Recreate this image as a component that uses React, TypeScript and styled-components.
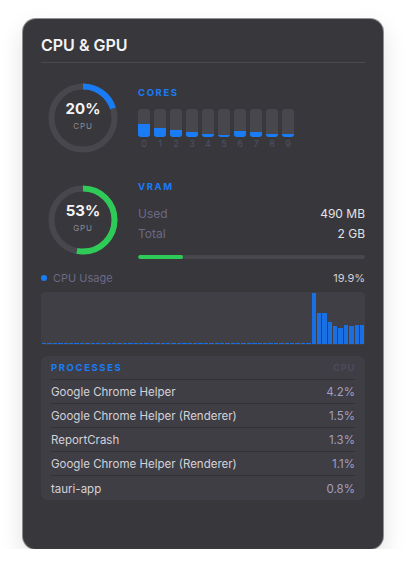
import React from "react";
import styled, { createGlobalStyle } from "styled-components";

const GlobalStyle = createGlobalStyle`
  html, body { margin: 0; padding: 0; background: #ffffff; }
  body { font-family: Inter, "Noto Sans", "Liberation Sans", sans-serif; -webkit-font-smoothing: antialiased; }
  * { box-sizing: border-box; }
`;

const BLUE = "#1a7cf4";
const BAR_BLUE = "#1a6fe2";
const GREEN = "#2fcb58";
const TRACK = "#48474d";

const Page = styled.div`
  padding: 19px 0 0 23px;
`;

const Card = styled.div`
  width: 360px;
  height: 530px;
  background: #38373c;
  border-radius: 13px;
  padding: 16px 18px 0 18px;
  box-shadow: 0 0 0 1px rgba(60, 60, 64, 0.55), 0 10px 24px rgba(0, 0, 0, 0.13);
  display: flex;
  flex-direction: column;
`;

const Title = styled.h1`
  margin: 0;
  font-size: 16px;
  line-height: 20px;
  font-weight: 600;
  color: #f3f3f6;
  padding-bottom: 7px;
  border-bottom: 1px solid #4a494f;
`;

const GaugeRow = styled.div<{ $top: number }>`
  display: grid;
  grid-template-columns: 84px 1fr;
  column-gap: 13px;
  align-items: center;
  margin-top: ${(p) => p.$top}px;
`;

const RingWrap = styled.div`
  position: relative;
  width: 70px;
  height: 70px;
  justify-self: center;
`;

const RingCenter = styled.div`
  position: absolute;
  inset: 0;
  display: flex;
  flex-direction: column;
  align-items: center;
  justify-content: center;
  padding-bottom: 5px;
`;

const RingValue = styled.div`
  font-size: 15px;
  line-height: 18px;
  font-weight: 700;
  color: #f4f4f7;
`;

const RingLabel = styled.div`
  font-size: 8px;
  line-height: 10px;
  letter-spacing: 0.8px;
  color: #8c8b95;
  margin-top: 3px;
`;

const SectionLabel = styled.div`
  font-size: 9.5px;
  line-height: 12px;
  font-weight: 700;
  letter-spacing: 1.6px;
  color: ${BLUE};
`;

const Cores = styled.div`
  display: flex;
  gap: 4px;
  margin-top: 10px;
`;

const Core = styled.div`
  width: 12px;
  display: flex;
  flex-direction: column;
`;

const CoreTrack = styled.div`
  height: 28px;
  border-radius: 3px;
  background: ${TRACK};
  overflow: hidden;
  display: flex;
  flex-direction: column;
  justify-content: flex-end;
`;

const CoreFill = styled.div`
  background: ${BLUE};
`;

const CoreNum = styled.div`
  margin-top: 1px;
  font-size: 9px;
  line-height: 11px;
  text-align: center;
  color: #525164;
`;

const Stats = styled.div`
  margin-top: 11px;
`;

const StatRow = styled.div`
  display: flex;
  justify-content: space-between;
  font-size: 12px;
  line-height: 20px;
`;

const StatKey = styled.span`
  color: #6b6985;
`;

const StatVal = styled.span`
  color: #e2e2e8;
`;

const Progress = styled.div`
  margin-top: 11px;
  height: 4px;
  border-radius: 2px;
  background: ${TRACK};
  overflow: hidden;
`;

const ProgressFill = styled.div`
  height: 100%;
  background: ${GREEN};
  border-radius: 2px;
`;

const UsageRow = styled.div`
  margin-top: 12px;
  display: flex;
  align-items: center;
  font-size: 11px;
  line-height: 14px;
`;

const Dot = styled.span`
  width: 6px;
  height: 6px;
  border-radius: 50%;
  background: ${BLUE};
  margin-right: 6px;
`;

const UsageLabel = styled.span`
  color: #6b6985;
  flex: 1;
`;

const UsageValue = styled.span`
  color: #cfcfd6;
`;

const Chart = styled.div`
  margin-top: 7px;
  height: 53px;
  background: #403f45;
  border-radius: 4px;
  display: flex;
  align-items: flex-end;
  gap: 1px;
  padding: 1px;
`;

const ChartBar = styled.div`
  flex: 1;
  min-height: 1px;
  background: ${BAR_BLUE};
`;

const Panel = styled.div`
  margin-top: 11px;
  background: #3f3e44;
  border-radius: 6px;
  padding: 0 10px;
`;

const PanelHead = styled.div`
  height: 24px;
  display: flex;
  align-items: center;
  justify-content: space-between;
  border-bottom: 1px solid #333237;
`;

const HeadLabel = styled.span<{ $dim?: boolean }>`
  font-size: 9.5px;
  font-weight: 700;
  letter-spacing: ${(p) => (p.$dim ? "0.6px" : "1.6px")};
  color: ${(p) => (p.$dim ? "#4d4b5e" : BLUE)};
`;

const ProcRow = styled.div`
  height: 24px;
  display: flex;
  align-items: center;
  justify-content: space-between;
  font-size: 11.5px;
  padding-top: 1px;
  border-bottom: 1px solid #333237;
  &:last-child { border-bottom: none; }
`;

const ProcName = styled.span`
  color: #d3d2da;
`;

const ProcVal = styled.span`
  color: #a49fbf;
`;

function Ring({ pct, color, value, label }: { pct: number; color: string; value: string; label: string }) {
  const r = 31.5;
  const c = 2 * Math.PI * r;
  return (
    <RingWrap>
      <svg width="70" height="70" viewBox="0 0 70 70">
        <circle cx="35" cy="35" r={r} fill="none" stroke={TRACK} strokeWidth="6" />
        <circle
          cx="35"
          cy="35"
          r={r}
          fill="none"
          stroke={color}
          strokeWidth="6"
          strokeDasharray={`${(c * pct) / 100} ${c}`}
          transform="rotate(-90 35 35)"
        />
      </svg>
      <RingCenter>
        <RingValue>{value}</RingValue>
        <RingLabel>{label}</RingLabel>
      </RingCenter>
    </RingWrap>
  );
}

const cores = [13, 9, 7, 5, 3, 2, 6, 5, 3, 3];
const usage: number[] = [
  ...Array(50).fill(0),
  100, 60, 60, 43, 35, 31, 38, 35, 38, 37,
];
const processes = [
  ["Google Chrome Helper", "4.2%"],
  ["Google Chrome Helper (Renderer)", "1.5%"],
  ["ReportCrash", "1.3%"],
  ["Google Chrome Helper (Renderer)", "1.1%"],
  ["tauri-app", "0.8%"],
];

export default function App() {
  return (
    <Page>
      <GlobalStyle />
      <Card>
        <Title>CPU &amp; GPU</Title>

        <GaugeRow $top={20}>
          <Ring pct={20} color={BLUE} value="20%" label="CPU" />
          <div>
            <SectionLabel>CORES</SectionLabel>
            <Cores>
              {cores.map((h, i) => (
                <Core key={i}>
                  <CoreTrack>
                    <CoreFill style={{ height: h }} />
                  </CoreTrack>
                  <CoreNum>{i}</CoreNum>
                </Core>
              ))}
            </Cores>
          </div>
        </GaugeRow>

        <GaugeRow $top={28}>
          <Ring pct={53} color={GREEN} value="53%" label="GPU" />
          <div>
            <SectionLabel>VRAM</SectionLabel>
            <Stats>
              <StatRow>
                <StatKey>Used</StatKey>
                <StatVal>490 MB</StatVal>
              </StatRow>
              <StatRow>
                <StatKey>Total</StatKey>
                <StatVal>2 GB</StatVal>
              </StatRow>
            </Stats>
            <Progress>
              <ProgressFill style={{ width: "20%" }} />
            </Progress>
          </div>
        </GaugeRow>

        <UsageRow>
          <Dot />
          <UsageLabel>CPU Usage</UsageLabel>
          <UsageValue>19.9%</UsageValue>
        </UsageRow>

        <Chart>
          {usage.map((v, i) => (
            <ChartBar key={i} style={{ height: `${v}%` }} />
          ))}
        </Chart>

        <Panel>
          <PanelHead>
            <HeadLabel>PROCESSES</HeadLabel>
            <HeadLabel $dim>CPU</HeadLabel>
          </PanelHead>
          {processes.map(([n, v], i) => (
            <ProcRow key={i}>
              <ProcName>{n}</ProcName>
              <ProcVal>{v}</ProcVal>
            </ProcRow>
          ))}
        </Panel>
      </Card>
    </Page>
  );
}
